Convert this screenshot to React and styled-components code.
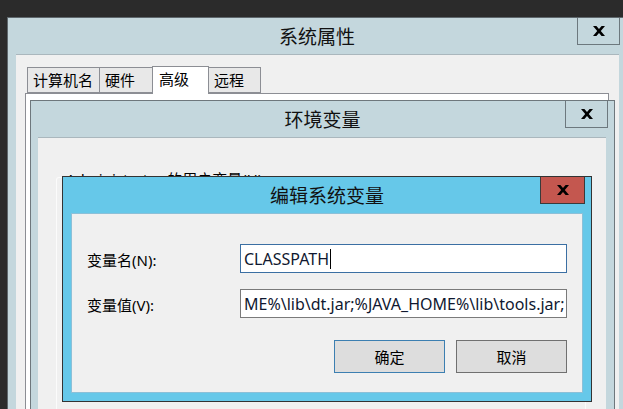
import React from 'react';
import styled, { createGlobalStyle } from 'styled-components';

const GlobalStyle = createGlobalStyle`
  html, body {
    margin: 0;
    padding: 0;
    background: #2b2b2b;
    overflow: hidden;
  }
  #root {
    width: 623px;
    height: 409px;
    position: relative;
    overflow: hidden;
    font-family: "Noto Sans", "Noto Sans CJK SC", sans-serif;
    color: #000;
  }
`;

const Desktop = styled.div`
  position: relative;
  width: 623px;
  height: 409px;
`;

// windows sit on the desktop at their own coordinates
const Window = styled.div`
  position: absolute;
  left: ${(p) => p.$x}px;
  top: ${(p) => p.$y}px;
  width: ${(p) => p.$w}px;
  height: ${(p) => p.$h}px;
  box-sizing: border-box;
  display: flex;
  flex-direction: column;
  background: ${(p) => p.$frame};
  border: 1px solid ${(p) => p.$edge};
`;

const TitleBar = styled.div`
  position: relative;
  height: 36px;
  flex-shrink: 0;
  display: flex;
  align-items: center;
  justify-content: center;
  font-family: "Noto Sans CJK SC", sans-serif;
  font-size: 19px;
  line-height: 24px;
  color: #111;
`;

const CloseButton = styled.div`
  position: absolute;
  top: 0;
  right: 6px;
  width: ${(p) => p.$w}px;
  height: 27px;
  box-sizing: border-box;
  display: flex;
  align-items: center;
  justify-content: center;
  background: ${(p) => p.$bg};
  border: 1px solid ${(p) => p.$edge};
  border-top: none;
`;

const Panel = styled.div`
  flex: 1;
  display: flex;
  flex-direction: column;
  background: #f0f0f0;
  margin: ${(p) => p.$margin};
  border-top: 1px solid ${(p) => p.$line};
  min-height: 0;
`;

const TabRow = styled.div`
  display: flex;
  align-items: flex-end;
  margin: 10px 0 0 11px;
  height: 28px;
`;

const Tab = styled.div`
  position: relative;
  box-sizing: border-box;
  width: ${(p) => p.$w}px;
  height: ${(p) => (p.$active ? 28 : 26)}px;
  margin-left: -1px;
  margin-bottom: ${(p) => (p.$active ? -1 : 0)}px;
  padding-left: ${(p) => (p.$active ? 6 : 5)}px;
  border: 1px solid #8c8e94;
  border-bottom: ${(p) => (p.$active ? 'none' : '1px solid #8c8e94')};
  background: ${(p) => (p.$active ? '#ffffff' : '#e8e8e8')};
  font-size: 15px;
  line-height: 24px;
  z-index: ${(p) => (p.$active ? 2 : 1)};

  &:first-child {
    margin-left: 0;
  }
`;

const TabPanel = styled.div`
  flex: 1;
  margin: 0 10px 0 9px;
  background: #ffffff;
  border: 1px solid #8c8e94;
  border-bottom: none;
`;

const UserVarsLabel = styled.div`
  margin: 31px 0 -12px 28px;
  font-size: 15px;
  line-height: 20px;
  white-space: nowrap;
`;

const ListBox = styled.div`
  flex: 1;
  margin: 0 20px 0 18px;
  border: 1px solid #fbfbfb;
  border-bottom: none;
  border-radius: 3px 3px 0 0;
`;

const EditPanel = styled.div`
  flex: 1;
  margin: 0 8px 8px 8px;
  background: #f0f0f0;
  border: 1px solid #8cc0d8;
  padding: 30px 15px 0 15px;
`;

const FormGrid = styled.div`
  display: grid;
  grid-template-columns: 153px 1fr;
  row-gap: 16px;
  align-items: center;
`;

const FieldLabel = styled.div`
  font-size: 15px;
  line-height: 20px;
  padding-top: 3px;
`;

const Field = styled.div`
  height: 29px;
  box-sizing: border-box;
  background: #ffffff;
  border: 1px solid ${(p) => (p.$focused ? '#3b6fa3' : '#7a7a7a')};
  display: flex;
  align-items: center;
  overflow: hidden;
  padding: 0 2px 0 3px;
  white-space: nowrap;
  font-size: 16px;
  color: #101830;
`;

const Caret = styled.span`
  display: inline-block;
  width: 1px;
  height: 20px;
  margin-left: 1px;
  background: #000;
`;

const ButtonRow = styled.div`
  display: flex;
  justify-content: flex-end;
  gap: 11px;
  margin-top: 22px;
`;

const Button = styled.div`
  width: 111px;
  height: 33px;
  box-sizing: border-box;
  display: flex;
  align-items: center;
  justify-content: center;
  background: #dddddd;
  border: 1px solid ${(p) => (p.$primary ? '#3c7fb1' : '#707070')};
  font-size: 15px;
`;

function CloseGlyph() {
  return (
    <svg width="12" height="10" viewBox="0 0 12 10">
      <polygon
        fill="#000"
        points="0,0 3.4,0 6,3 8.6,0 12,0 7.8,5 12,10 8.6,10 6,7 3.4,10 0,10 4.2,5"
      />
    </svg>
  );
}

const tabs = [
  { label: '计算机名', w: 73 },
  { label: '硬件', w: 54 },
  { label: '高级', w: 57, active: true },
  { label: '远程', w: 53 },
];

export default function App() {
  return (
    <>
      <GlobalStyle />
      <Desktop>
        <Window $x={7} $y={17} $w={620} $h={410} $frame="#c4d7dd" $edge="#5e676c">
          <TitleBar>
            系统属性
            <CloseButton $w={43} $bg="#c4d7dd" $edge="#6d787e">
              <CloseGlyph />
            </CloseButton>
          </TitleBar>
          <Panel $margin="0 7px 0 8px" $line="#aab7bd">
            <TabRow>
              {tabs.map((t) => (
                <Tab key={t.label} $w={t.w} $active={t.active}>
                  {t.label}
                </Tab>
              ))}
            </TabRow>
            <TabPanel />
          </Panel>
        </Window>

        <Window $x={30} $y={100} $w={585} $h={320} $frame="#c4d7dd" $edge="#6e777c">
          <TitleBar>
            环境变量
            <CloseButton $w={43} $bg="#c4d7dd" $edge="#6d787e">
              <CloseGlyph />
            </CloseButton>
          </TitleBar>
          <Panel $margin="0 8px 0 7px" $line="#aab7bd">
            <UserVarsLabel>Administrator 的用户变量(U)</UserVarsLabel>
            <ListBox />
          </Panel>
        </Window>

        <Window $x={62} $y={176} $w={530} $h={226} $frame="#66c8e9" $edge="#333333">
          <TitleBar>
            编辑系统变量
            <CloseButton $w={45} $bg="#c4574f" $edge="#3a3a3a">
              <CloseGlyph />
            </CloseButton>
          </TitleBar>
          <EditPanel>
            <FormGrid>
              <FieldLabel>变量名(N):</FieldLabel>
              <Field $focused>
                CLASSPATH
                <Caret />
              </Field>
              <FieldLabel>变量值(V):</FieldLabel>
              <Field>ME%\lib\dt.jar;%JAVA_HOME%\lib\tools.jar;</Field>
            </FormGrid>
            <ButtonRow>
              <Button $primary>确定</Button>
              <Button>取消</Button>
            </ButtonRow>
          </EditPanel>
        </Window>
      </Desktop>
    </>
  );
}
